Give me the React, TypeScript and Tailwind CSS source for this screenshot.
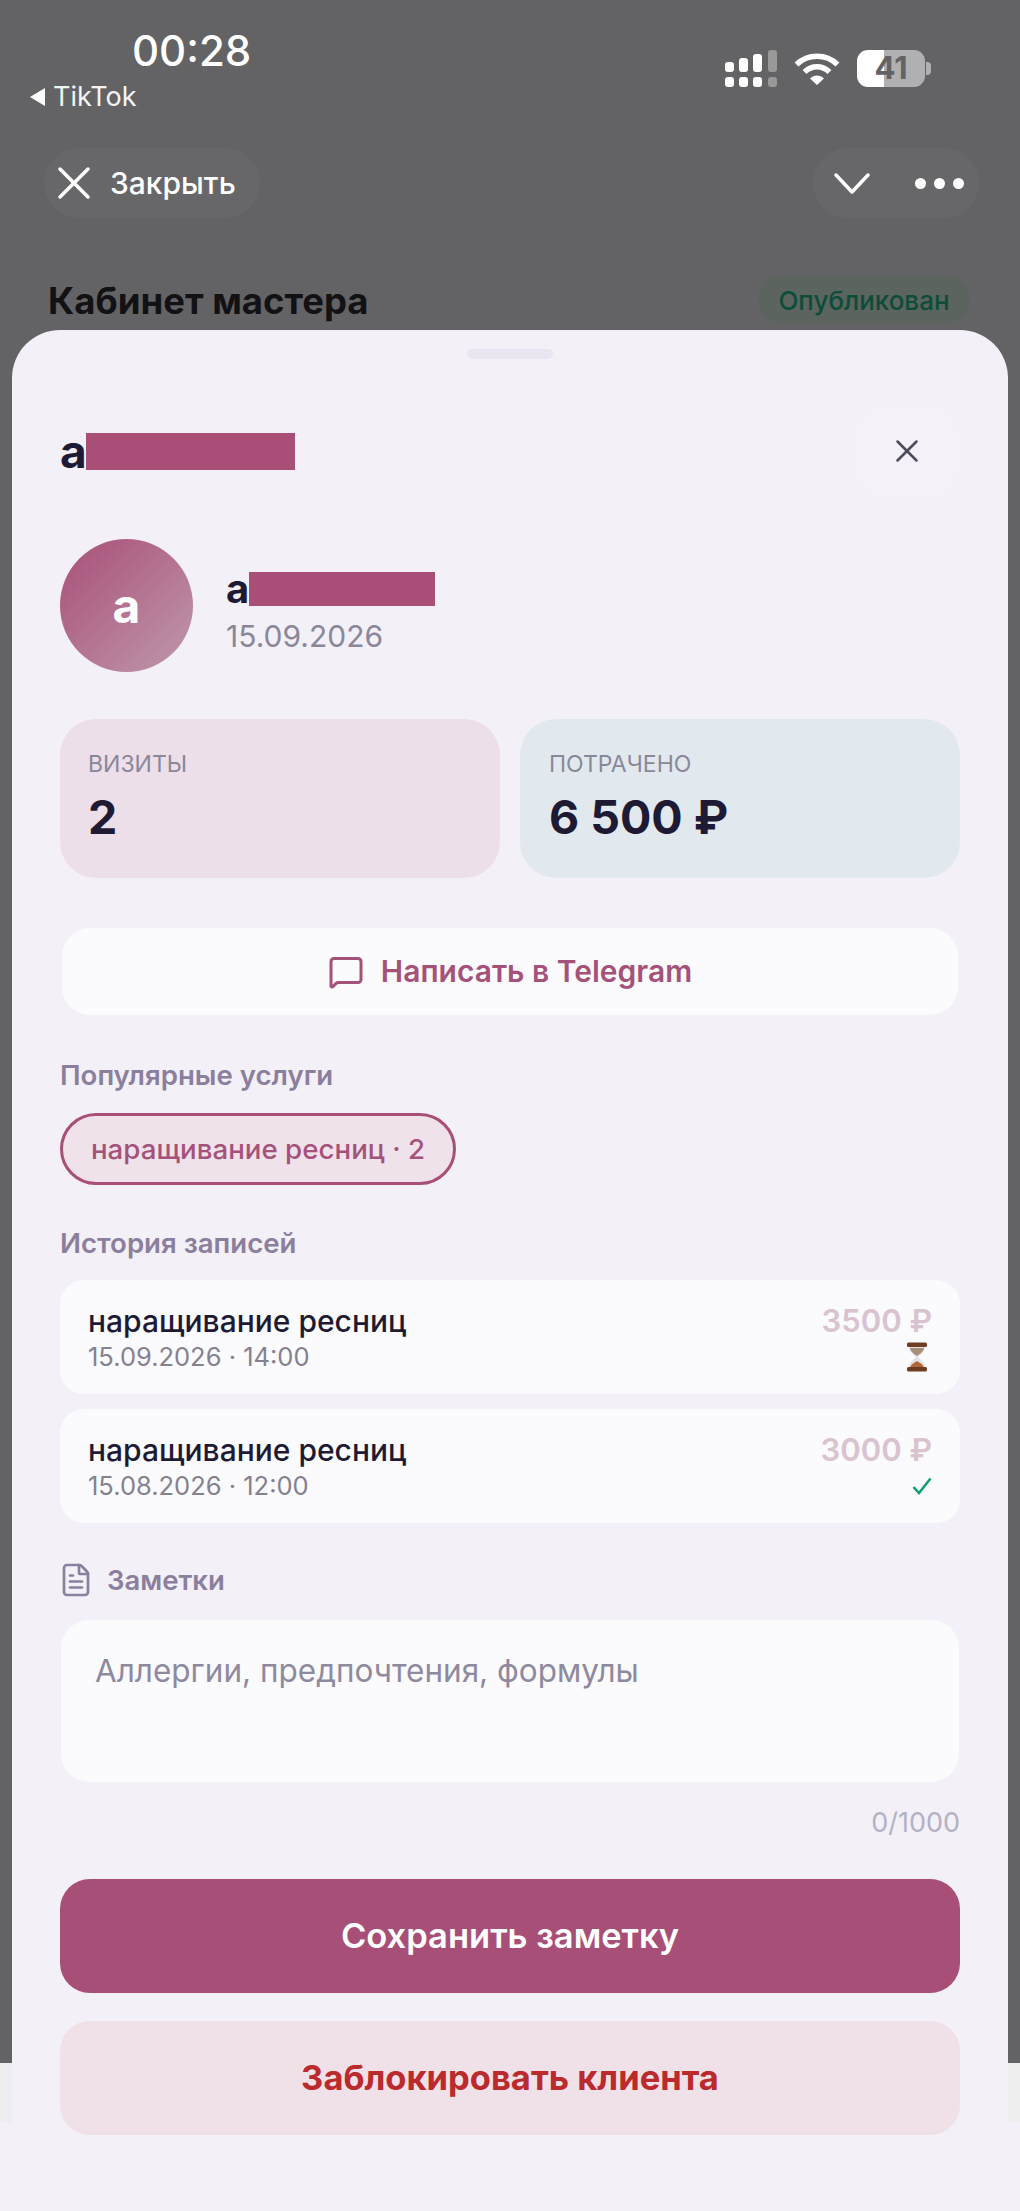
import { FileText, MessageSquare, X } from 'lucide-react'

const visits = [
  { date: '15.09.2026 · 14:00', price: '3500 ₽', done: false },
  { date: '15.08.2026 · 12:00', price: '3000 ₽', done: true },
]

function SignalIcon() {
  return (
    <svg width="52" height="37" viewBox="0 0 52 37" fill="#fff">
      <rect x="0" y="12" width="9" height="10" rx="3" />
      <rect x="14" y="8" width="9" height="14" rx="3" />
      <rect x="28" y="4" width="9" height="18" rx="3" />
      <rect x="43" y="0" width="9" height="22" rx="3" opacity="0.35" />
      <rect x="0" y="27" width="9" height="10" rx="3" />
      <rect x="14" y="27" width="9" height="10" rx="3" />
      <rect x="28" y="27" width="9" height="10" rx="3" />
      <rect x="43" y="27" width="9" height="10" rx="3" opacity="0.35" />
    </svg>
  )
}

function WifiIcon() {
  return (
    <svg width="46" height="33" viewBox="0 0 46 33" fill="none" stroke="#fff" strokeWidth="5.5">
      <path d="M2.5 12.5C14 1.5 32 1.5 43.5 12.5" />
      <path d="M10.5 20C18 13 28 13 35.5 20" />
      <path d="M16 26.5L23 33L30 26.5C26 22.5 20 22.5 16 26.5Z" fill="#fff" stroke="none" />
    </svg>
  )
}

function Hourglass() {
  return (
    <svg width="24" height="30" viewBox="0 0 24 30">
      <path d="M4 4H20C20 11 14 13 13 15C14 17 20 19 20 26H4C4 19 10 17 11 15C10 13 4 11 4 4Z" fill="#e4e2e6" />
      <path d="M5 6H19C18.500 10 14.500 12 12 14C9.500 12 5.500 10 5 6Z" fill="#a58f78" />
      <path d="M5 26C6 22 9 21 12 19C15 21 18 22 19 26Z" fill="#b0673a" />
      <rect x="2" y="0.500" width="20" height="4.500" rx="1.500" fill="#6e3d22" />
      <rect x="2" y="25" width="20" height="4.500" rx="1.500" fill="#6e3d22" />
    </svg>
  )
}

export default function App() {
  return (
    <div className="h-[2211px] overflow-hidden bg-[linear-gradient(#636365_2063px,#eeeeef_2063px,#eeeeef_2122px,#f3f0f8_2122px)] font-['Inter',sans-serif]">
      {/* status bar */}
      <div className="flex h-[148px] justify-between">
        <div className="pl-[30px] pt-[29px]">
          <div className="ml-[102px] text-[42px] leading-[44px] font-medium text-white">00:28</div>
          <div className="mt-[9px] flex items-center gap-[8px] text-[27px] leading-[30px] text-[#f4f4f4]">
            <span className="h-0 w-0 border-y-[9px] border-r-[15px] border-y-transparent border-r-white" />
            TikTok
          </div>
        </div>
        <div className="flex items-start gap-[17px] pt-[50px] pr-[89px]">
          <SignalIcon />
          <div className="pt-[2px]">
            <WifiIcon />
          </div>
          <div className="flex items-center gap-[1px]">
            <div className="flex h-[37px] w-[68px] items-center justify-center rounded-[11px] bg-[linear-gradient(90deg,#fff_27px,#b0b0b2_27px)] text-[31px] font-bold text-[#636365]">
              41
            </div>
            <div className="h-[13px] w-[5px] rounded-r-[4px] bg-[#b0b0b2]" />
          </div>
        </div>
      </div>

      {/* miniapp header */}
      <div className="flex h-[70px] justify-between pr-[41px] pl-[44px]">
        <div className="flex w-[216px] items-center gap-[8px] rounded-full bg-[#676669] pl-[2px]">
          <X className="h-[56px] w-[56px] text-white" strokeWidth={1.5} />
          <span className="text-[30px] font-medium text-white">Закрыть</span>
        </div>
        <div className="flex w-[166px] items-center gap-[45px] rounded-full bg-[#676669] pl-[21px]">
          <svg width="36" height="21" viewBox="0 0 36 21" fill="none" stroke="#fff" strokeWidth="3.5" strokeLinecap="round" strokeLinejoin="round">
            <path d="M2 2L18 19L34 2" />
          </svg>
          <div className="flex gap-[8px]">
            <span className="h-[11px] w-[11px] rounded-full bg-white" />
            <span className="h-[11px] w-[11px] rounded-full bg-white" />
            <span className="h-[11px] w-[11px] rounded-full bg-white" />
          </div>
        </div>
      </div>

      <div className="flex h-[112px] items-start justify-between pt-[57px] pr-[50px] pl-[48px]">
        <h1 className="mt-[4px] text-[36.500px] leading-[44px] font-bold text-[#121214]">Кабинет мастера</h1>
        <div className="flex h-[48px] w-[212px] items-center justify-center rounded-full bg-[#5b645f] pt-[2px] text-[26px] font-medium text-[#0d4d38]">
          Опубликован
        </div>
      </div>

      {/* client sheet */}
      <div className="mx-[12px] h-[1881px] rounded-t-[48px] bg-[#f3f0f8] px-[48px] pt-[19px]">
        <div className="mx-auto h-[10px] w-[86px] rounded-full bg-[#e9e6f2]" />

        <div className="mt-[46px] flex items-center justify-between">
          <div className="flex items-center">
            <span className="w-[26px] text-[46px] leading-[37px] font-bold text-[#1e1a33]">а</span>
            <span className="h-[37px] w-[209px] bg-[#a94f77]" />
          </div>
          <div className="flex h-[92px] w-[106px] items-center justify-center rounded-[28px] bg-[#f4f1f8]">
            <X className="h-[38px] w-[38px] text-[#4d4a5c]" strokeWidth={1.6} />
          </div>
        </div>

        <div className="mt-[42px] flex items-center gap-[33px]">
          <div className="flex h-[133px] w-[133px] items-center justify-center rounded-full bg-[linear-gradient(135deg,#a94f77,#bf98ad)] text-[48px] font-bold text-white">
            а
          </div>
          <div className="pt-[14px]">
            <div className="flex items-center">
              <span className="w-[23px] text-[40px] leading-[34px] font-bold text-[#1e1a33]">а</span>
              <span className="h-[34px] w-[186px] bg-[#a94f77]" />
            </div>
            <div className="mt-[12px] text-[30px] leading-[36px] text-[#8a8799]">15.09.2026</div>
          </div>
        </div>

        <div className="mt-[47px] grid grid-cols-2 gap-[20px]">
          <div className="h-[159px] rounded-[36px] bg-[#ecdfe9] pt-[30px] pl-[28px]">
            <div className="text-[23px] leading-[30px] text-[#8a8799]">ВИЗИТЫ</div>
            <div className="mt-[10px] text-[46.500px] leading-[56px] font-bold text-[#1e1a33]">2</div>
          </div>
          <div className="h-[159px] rounded-[36px] bg-[#e1e9ee] pt-[30px] pl-[29px]">
            <div className="text-[23px] leading-[30px] text-[#8a8799]">ПОТРАЧЕНО</div>
            <div className="mt-[10px] text-[46.500px] leading-[56px] font-bold text-[#1e1a33]">6 500 ₽</div>
          </div>
        </div>

        <button className="mx-[2px] mt-[50px] flex h-[87px] w-[896px] items-center justify-center gap-[17px] rounded-[28px] bg-[#fbfafd] text-[30px] font-semibold text-[#a5527a]">
          <MessageSquare className="h-[36px] w-[36px]" strokeWidth={2} />
          Написать в Telegram
        </button>

        <div className="mt-[42px] text-[27.600px] leading-[36px] font-semibold text-[#8b7f9d]">Популярные услуги</div>
        <div className="mt-[20px] flex h-[72px] w-[396px] items-center justify-center rounded-full border-[3px] border-[#a94f77] bg-[#efe2ea] pt-[2px] text-[27.700px] font-medium text-[#a5527a]">
          наращивание ресниц · 2
        </div>

        <div className="mt-[40px] text-[27.600px] leading-[36px] font-semibold text-[#8b7f9d]">История записей</div>
        <div className="mt-[19px] flex flex-col gap-[15px]">
          {visits.map(visit => (
            <div key={visit.date} className="flex h-[114px] items-start justify-between rounded-[24px] bg-[#fbfafd] px-[28px] pt-[23px]">
              <div>
                <div className="text-[30px] leading-[36px] font-medium text-[#1e1a33]">наращивание ресниц</div>
                <div className="mt-[1px] text-[25.500px] leading-[34px] text-[#85818f]">{visit.date}</div>
              </div>
              <div className="flex flex-col items-end">
                <div className="text-[31px] leading-[36px] font-semibold text-[#d9c3cf]">{visit.price}</div>
                {visit.done ? (
                  <svg className="mt-[9px]" width="20" height="18" viewBox="0 0 20 18" fill="none" stroke="#0e9f6e" strokeWidth="2.5">
                    <path d="M1.500 10L7 16L18.500 1.500" />
                  </svg>
                ) : (
                  <div className="mt-[3px] mr-[3px]">
                    <Hourglass />
                  </div>
                )}
              </div>
            </div>
          ))}
        </div>

        <div className="mt-[39px] -ml-[2px] flex items-center gap-[13px] text-[27.500px] leading-[36px] font-semibold text-[#8b7f9d]">
          <FileText className="h-[36px] w-[36px]" strokeWidth={1.800} />
          Заметки
        </div>
        <div className="mx-[1px] mt-[22px] h-[162px] rounded-[28px] bg-[#fbfafd] px-[34px] pt-[31px] text-[31.500px] leading-[40px] text-[#8e8a9e]">
          Аллергии, предпочтения, формулы
        </div>
        <div className="mt-[24px] text-right text-[27px] leading-[34px] text-[#b3b1c2]">0/1000</div>

        <button className="mt-[39px] flex h-[114px] w-full items-center justify-center rounded-[30px] bg-[#a84f77] text-[34.500px] font-semibold text-white">
          Сохранить заметку
        </button>
        <button className="mt-[28px] flex h-[114px] w-full items-center justify-center rounded-[30px] bg-[#f0e0e7] text-[34.500px] font-bold text-[#bb2a2c]">
          Заблокировать клиента
        </button>
      </div>
    </div>
  )
}
